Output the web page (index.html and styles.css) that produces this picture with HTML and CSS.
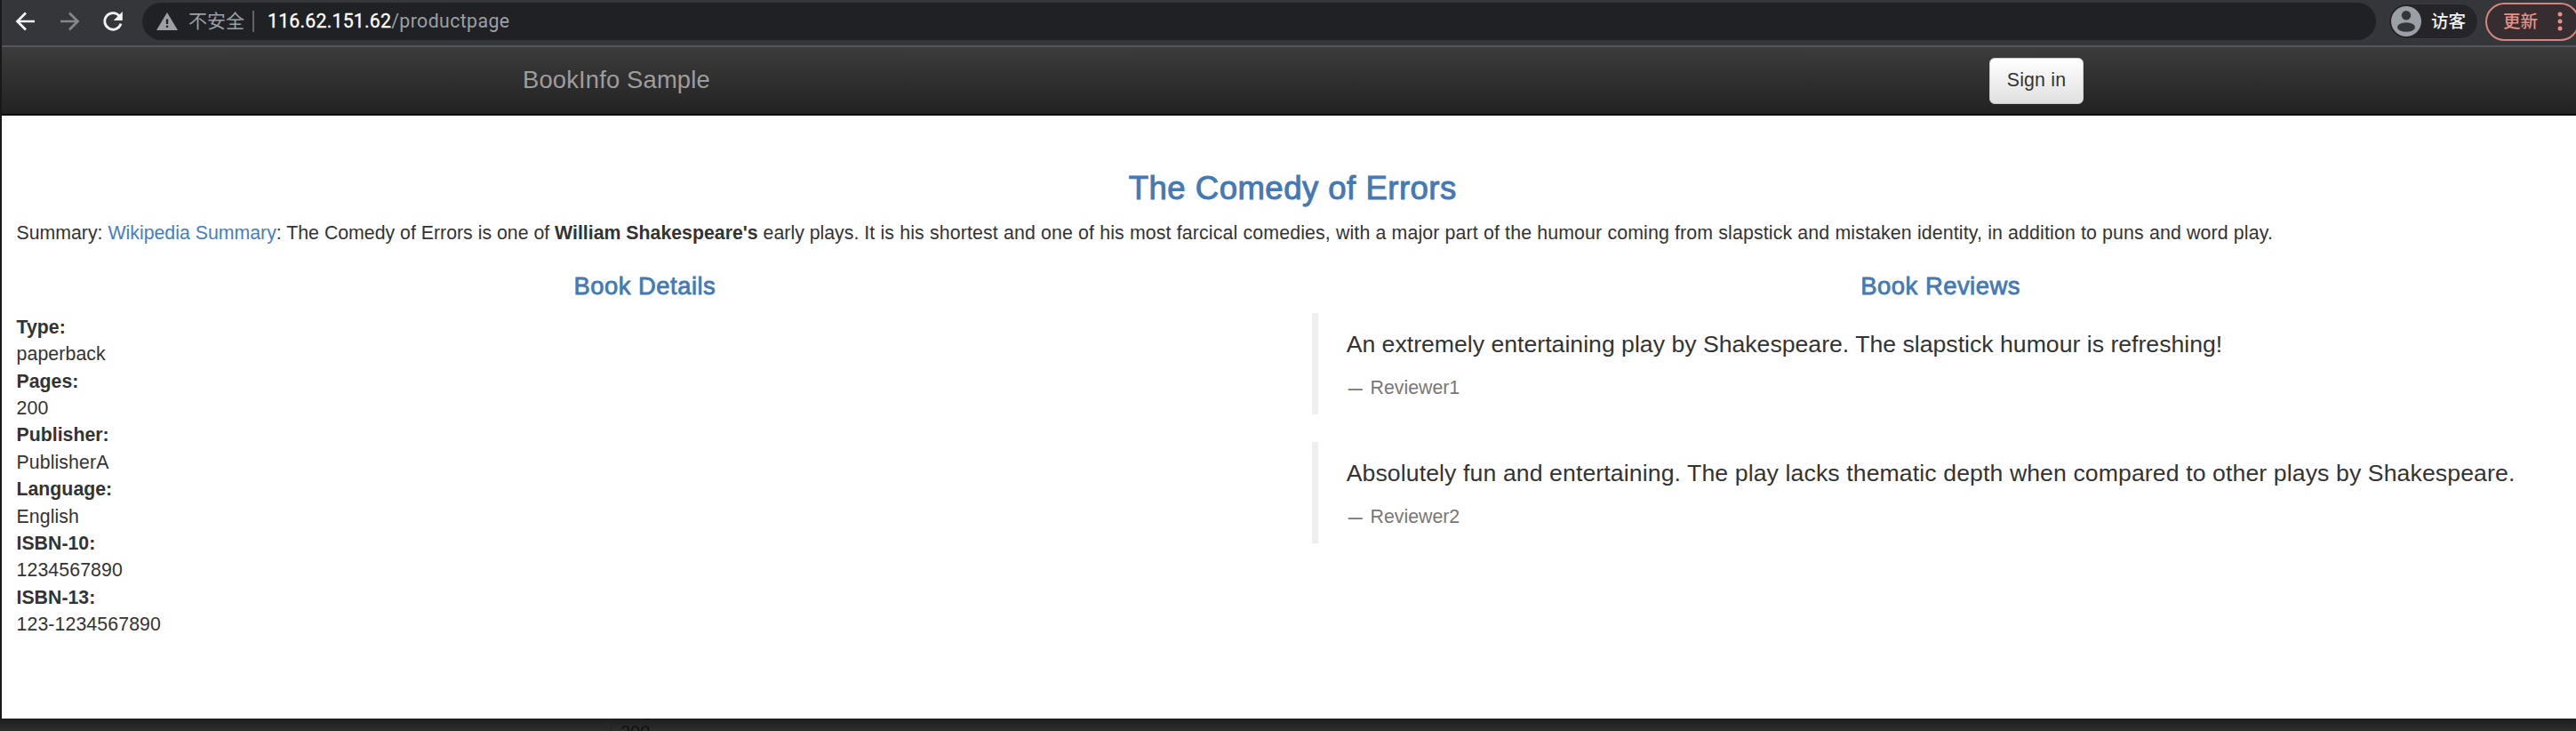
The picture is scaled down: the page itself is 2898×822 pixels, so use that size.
FILE: index.html
```
<!DOCTYPE html>
<html lang="en">
<head>
<meta charset="utf-8">
<title>Simple Bookstore App</title>
<link rel="stylesheet" href="styles.css">
</head>
<body>
<div class="window">
  <header class="toolbar">
    <svg class="nav-icon" viewBox="0 0 24 24"><path d="M22 12H3M12 2.500L2.500 12l9.500 9.500" fill="none" stroke="#f1f3f4" stroke-width="2.700"/></svg>
    <svg class="nav-icon" viewBox="0 0 24 24"><path d="M2 12h19M12 2.500l9.500 9.500-9.500 9.500" fill="none" stroke="#86878a" stroke-width="2.700"/></svg>
    <svg class="nav-icon" viewBox="0 0 24 24"><path d="M19.500 6.300A9.300 9.300 0 1 0 21 14.600" fill="none" stroke="#f1f3f4" stroke-width="2.800"/><path d="M22.800 1v10h-10z" fill="#f1f3f4"/></svg>
    <div class="address">
      <svg class="warn" viewBox="0 0 24 20"><path d="M12 0l12 20H0z" fill="#9aa0a6"/><path d="M10.900 7.500h2.300v5.500h-2.300zM10.900 14.800h2.300V17h-2.300z" fill="#202124"/></svg>
      <span class="insecure">不安全</span>
      <span class="divider"></span>
      <span class="url"><span class="host">116.62.151.62</span><span class="path">/productpage</span></span>
    </div>
    <div class="profile">
      <svg class="avatar" viewBox="0 0 34 34"><circle cx="17" cy="17" r="17" fill="#9aa0a6"/><circle cx="17" cy="10.200" r="5.200" fill="#35363a"/><ellipse cx="17" cy="23.500" rx="10" ry="5.300" fill="#35363a"/></svg>
      <span class="guest">访客</span>
    </div>
    <div class="update">
      <span>更新</span>
      <svg class="dots" viewBox="0 0 6 22"><g fill="#e58f86"><circle cx="3" cy="3" r="2.500"/><circle cx="3" cy="11" r="2.500"/><circle cx="3" cy="19" r="2.500"/></g></svg>
    </div>
  </header>
  <nav class="navbar">
    <a class="brand">BookInfo Sample</a>
    <button class="signin" type="button">Sign in</button>
  </nav>
  <main class="page">
    <h3 class="title">The Comedy of Errors</h3>
    <p class="summary">Summary: <a class="link">Wikipedia Summary</a>: The Comedy of Errors is one of <b>William Shakespeare's</b> early plays. <span class="synopsis">It is his shortest and one of his most farcical comedies, with a major part of the humour coming from slapstick and mistaken identity, in addition to puns and word play.</span></p>
    <div class="columns">
      <section>
        <h4 class="heading">Book Details</h4>
        <dl class="details">
          <dt>Type:</dt><dd>paperback</dd>
          <dt>Pages:</dt><dd>200</dd>
          <dt>Publisher:</dt><dd>PublisherA</dd>
          <dt>Language:</dt><dd>English</dd>
          <dt>ISBN-10:</dt><dd>1234567890</dd>
          <dt>ISBN-13:</dt><dd>123-1234567890</dd>
        </dl>
      </section>
      <section>
        <h4 class="heading">Book Reviews</h4>
        <blockquote class="review"><p class="quote">An extremely entertaining play by Shakespeare. The slapstick humour is refreshing!</p><small class="reviewer"><span class="dash">—</span> Reviewer1</small></blockquote>
        <blockquote class="review"><p class="quote loose">Absolutely fun and entertaining. The play lacks thematic depth when compared to other plays by Shakespeare.</p><small class="reviewer"><span class="dash">—</span> Reviewer2</small></blockquote>
      </section>
    </div>
  </main>
</div>
<div class="backdrop"><div class="behind"><span>Pages:</span><span>200</span></div></div>
</body>
</html>
```
FILE: styles.css
```
* { box-sizing: border-box; }
body {
  margin: 0;
  height: 822px;
  overflow: hidden;
  background: #292929;
  color: #333;
  font-family: "Liberation Sans", "Noto Sans CJK SC", sans-serif;
  font-size: 21.3px;
  line-height: 30.4px;
}
.window { height: 808px; border-left: 2px solid #19191b; background: #fff; }

.toolbar {
  display: flex;
  align-items: center;
  height: 53px;
  padding: 0 0 3px 15px;
  background: #35363a;
  border-bottom: 2px solid #55565b;
}
.nav-icon { width: 24px; height: 24px; margin-right: 25px; flex: none; }
.address {
  display: flex;
  align-items: center;
  width: 2513px;
  height: 42px;
  margin-left: -4px;
  padding-left: 16px;
  border-radius: 21px;
  background: #202124;
  flex: none;
}
.warn { width: 24px; height: 20px; margin-right: 12px; }
.insecure { width: 63px; color: #9aa0a6; font-size: 21px; white-space: nowrap; }
.divider { width: 2px; height: 24px; margin: 0 15px 0 9px; background: #5f6368; }
.url { font-family: Roboto, sans-serif; font-size: 21.3px; white-space: nowrap; }
.host { color: #fff; letter-spacing: 0.2px; -webkit-text-stroke: 0.3px #fff; }
.path { color: #9aa0a6; letter-spacing: 0.4px; }
.profile {
  display: flex;
  align-items: center;
  width: 101px;
  height: 40px;
  margin-left: 14px;
  padding-left: 2px;
  border: 1px solid #3b3b40;
  border-radius: 20px;
  background: #252529;
  flex: none;
}
.avatar { width: 34px; height: 34px; margin-right: 11px; }
.guest { color: #f1f3f4; font-size: 19.5px; font-weight: 500; }
.update {
  display: flex;
  align-items: center;
  width: 106px;
  height: 43px;
  margin-left: 8px;
  padding-left: 18px;
  border: 2px solid #d6857c;
  border-radius: 22px;
  background: #352d2f;
  color: #e58f86;
  font-size: 19.5px;
  font-weight: 500;
  flex: none;
}
.dots { width: 6px; height: 22px; margin-left: 22px; }

.navbar {
  display: flex;
  align-items: center;
  justify-content: space-between;
  height: 77px;
  padding: 0 554px 0 586px;
  background: linear-gradient(#3c3c3c, #222);
  border-bottom: 2px solid #080808;
}
.brand { color: #9d9d9d; font-size: 27.4px; letter-spacing: 0.15px; }
.signin {
  width: 106px;
  height: 52px;
  padding: 0;
  border: 1px solid #ccc;
  border-radius: 6px;
  background: linear-gradient(#fff, #e0e0e0);
  color: #333;
  font: 21.3px "Liberation Sans", sans-serif;
  letter-spacing: 0.2px;
}

.page { padding: 62px 8px 0 16.500px; }
.title, .heading {
  margin: 0;
  color: #4579b3;
  font-weight: 500;
  text-align: center;
  letter-spacing: 0.5px;
  -webkit-text-stroke: 1px #4579b3;
}
.title { font-size: 36.5px; line-height: 40.1px; }
.summary { margin: 15.200px 0; white-space: nowrap; }
.synopsis { letter-spacing: 0.15px; }
.link { color: #4480c0; }
.columns { display: grid; grid-template-columns: 1fr 1fr; column-gap: 44px; }
.heading { margin: 14px 0 15.200px; font-size: 27.4px; line-height: 30.1px; -webkit-text-stroke-width: 0.8px; }
.details { margin: 0; padding-top: 0.600px; }
.details dt { font-weight: 700; }
.details dd { margin: 0; letter-spacing: 0.1px; }
.review {
  margin: 0 0 30.400px;
  padding: 16px 0 14.400px 31.400px;
  border-left: 7.600px solid #eee;
}
.quote { margin: 0 0 15.200px; font-size: 26.6px; line-height: 38px; letter-spacing: 0.02px; white-space: nowrap; }
.loose { letter-spacing: 0.12px; }
.reviewer { display: block; color: #777; font-size: 21.3px; }
.dash { margin: 0 3px 0 2px; font-size: 16px; font-weight: 700; line-height: 0; }

.backdrop { height: 14px; overflow: hidden; padding-left: 687px; background: linear-gradient(#1e1e1e, #2e2e2e); }
.behind {
  display: flex;
  flex-direction: column;
  margin-top: -22px;
  padding-left: 10px;
  border-left: 1px solid #222230;
  color: #121212;
  font-size: 20px;
  line-height: 25px;
}
```
